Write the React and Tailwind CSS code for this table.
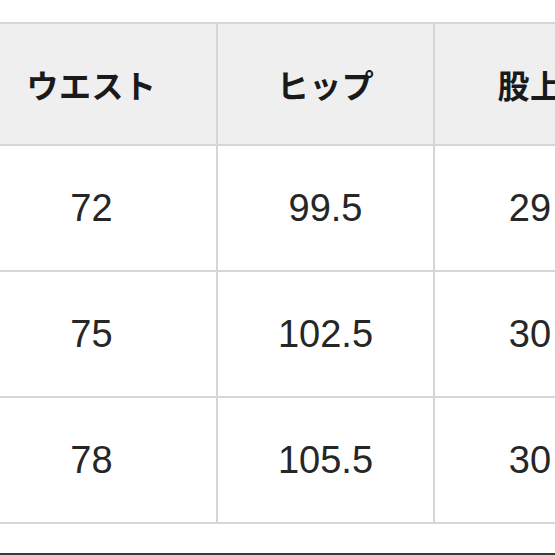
import React from 'react'

const headers = ['ウエスト', 'ヒップ', '股上']

const rows = [
  ['72', '99.5', '29'],
  ['75', '102.5', '30'],
  ['78', '105.5', '30'],
]

const App = () => {
  return (
    <div className="w-[555px] h-[555px] bg-white overflow-hidden flex flex-col">
      <div className="h-[22px] shrink-0" />

      {/* size table, first column runs off the left edge */}
      <div className="-ml-[33px] w-[690px] grid grid-cols-[249px_215px_190px] gap-[2px] bg-[#d6d6d6] py-[2px] shrink-0">
        {headers.map((h) => (
          <div
            key={h}
            className="h-[120px] bg-[#efefef] flex items-center justify-center text-[32px] font-bold text-[#1a1a1a] tracking-[0.5px]"
            style={{ fontFamily: '"Noto Sans CJK JP", "Noto Sans", sans-serif' }}
          >
            {h}
          </div>
        ))}
        {rows.map((r, i) =>
          r.map((v, j) => (
            <div
              key={i + '-' + j}
              className="h-[124px] bg-white flex items-center justify-center text-[38px] text-[#262626]"
              style={{ fontFamily: '"Liberation Sans", Arial, sans-serif' }}
            >
              {v}
            </div>
          ))
        )}
      </div>

      <div className="flex-1" />
      <div className="h-[2px] bg-[#3a3a3a] shrink-0" />
    </div>
  )
}

export default App
